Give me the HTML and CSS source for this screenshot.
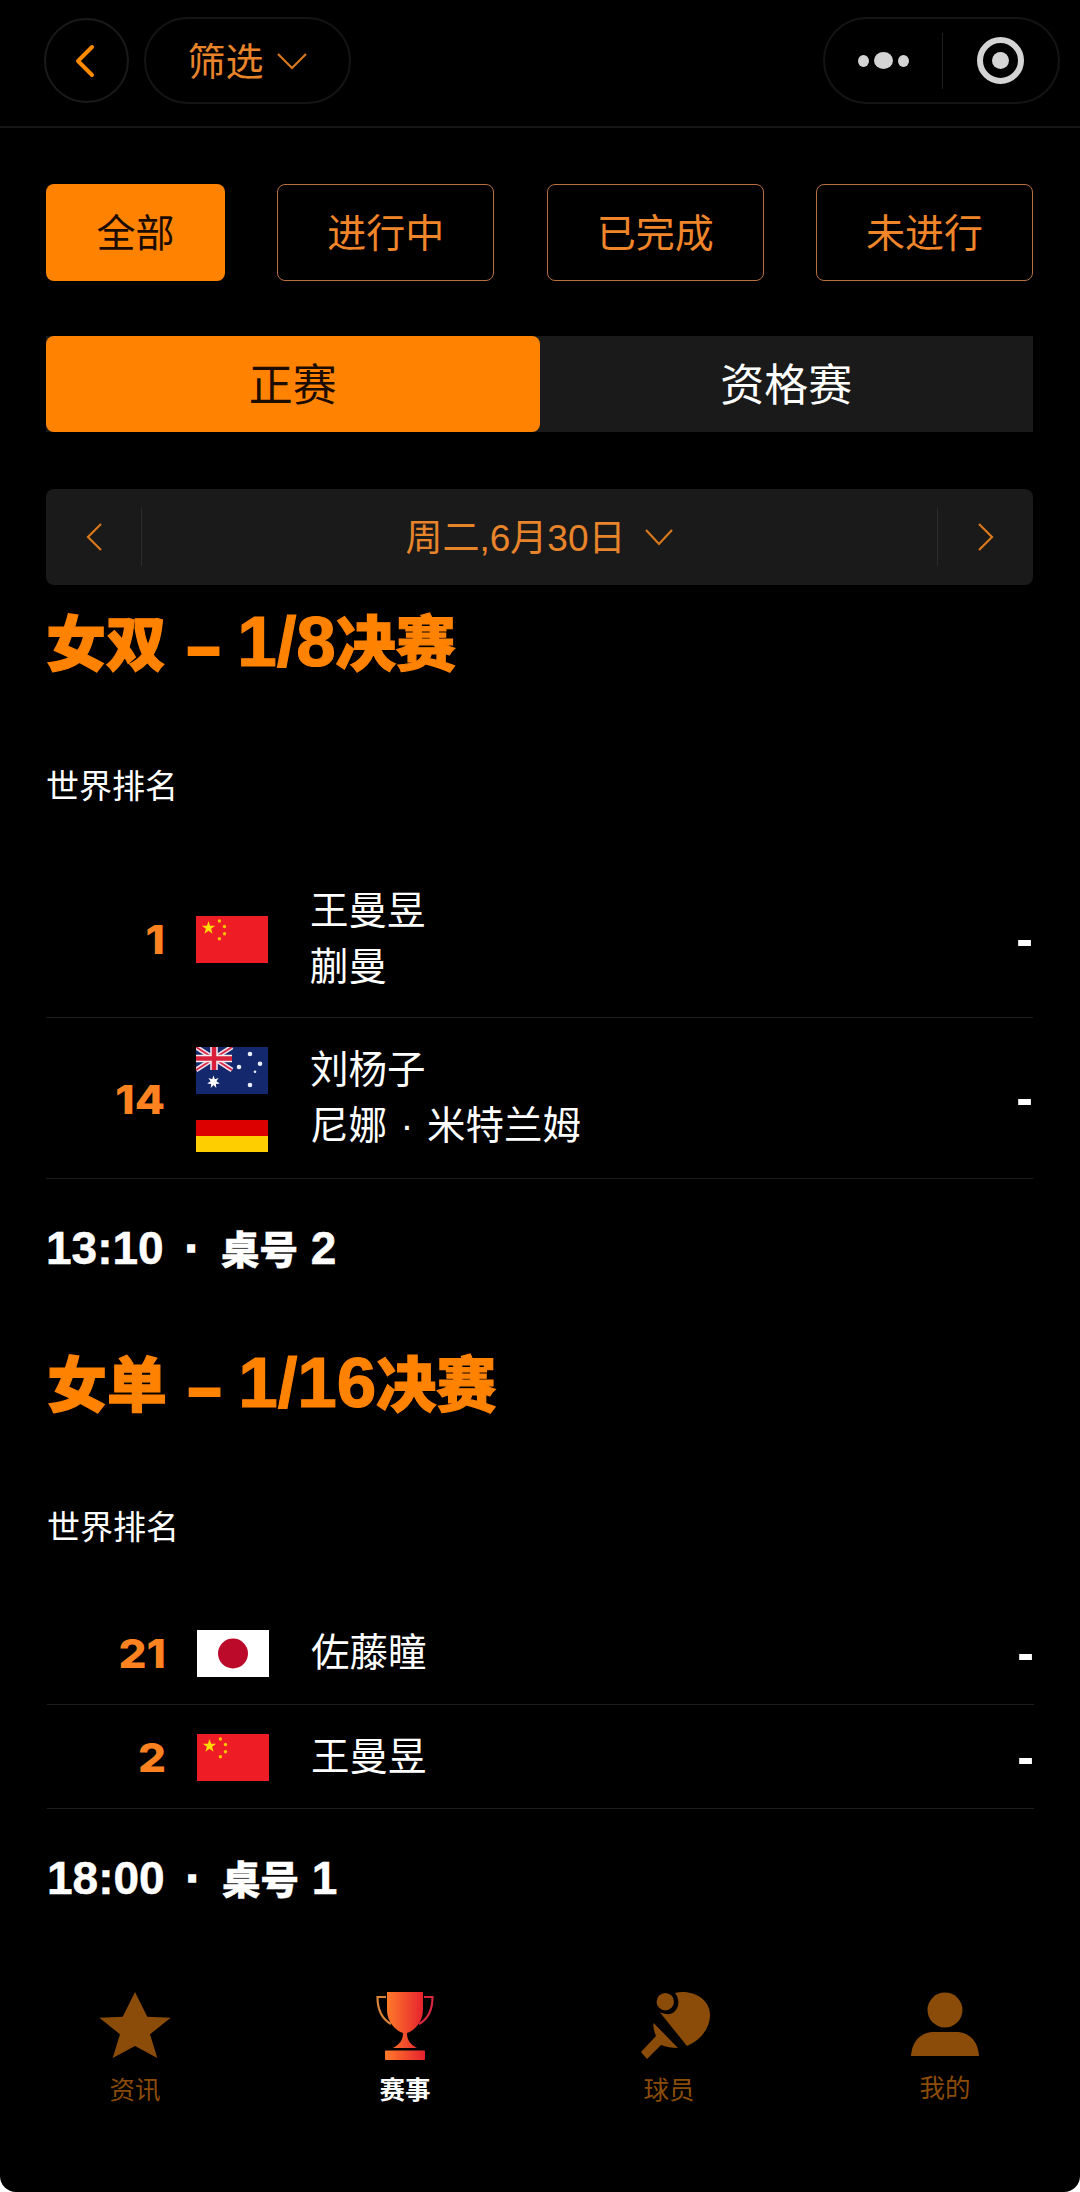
FILE: index.html
```html
<!DOCTYPE html>
<html lang="zh-CN">
<head>
    <meta charset="UTF-8">
    <meta name="viewport" content="width=device-width, initial-scale=1.0">
    <title>赛事</title>
    <link rel="stylesheet" href="styles.css">
</head>
<body>
    <svg class="defs" width="0" height="0">
        <defs>
            <symbol id="flag-cn" viewBox="0 0 72 47">
                <rect width="72" height="47" fill="#ee1c25"/>
                <polygon points="12.5,5 14.1,9.8 19.2,9.8 15.1,12.8 16.6,17.7 12.5,14.7 8.4,17.7 9.9,12.8 5.8,9.8 10.9,9.8" fill="#ffdd00"/>
                <circle cx="23.4" cy="5" r="1.7" fill="#ffc400"/>
                <circle cx="28.5" cy="10.5" r="1.7" fill="#ffc400"/>
                <circle cx="28.5" cy="17.7" r="1.7" fill="#ffc400"/>
                <circle cx="23.4" cy="22.7" r="1.7" fill="#ffc400"/>
            </symbol>
            <linearGradient id="cup" x1="0" y1="0" x2="1" y2="0">
                <stop offset="0" stop-color="#ff7a2a"/>
                <stop offset="1" stop-color="#e6222e"/>
            </linearGradient>
        </defs>
    </svg>

    <div class="page">
        <div class="topbar">
            <div class="back">
                <svg width="24" height="36" viewBox="0 0 24 36"><path d="M20 4 L6 18 L20 32" fill="none" stroke="#ff8a00" stroke-width="4" stroke-linecap="round" stroke-linejoin="round"/></svg>
            </div>
            <div class="filter-pill">
                <span class="cjk-up">筛选</span>
                <svg width="32" height="20" viewBox="0 0 32 20"><path d="M2 3 L16 17 L30 3" fill="none" stroke="#d8781c" stroke-width="2.2"/></svg>
            </div>
            <div class="capsule">
                <div class="capsule-dots"><i class="dot"></i><i class="dot big"></i><i class="dot"></i></div>
                <div class="capsule-line"></div>
                <div class="capsule-target"><i></i></div>
            </div>
        </div>

        <div class="filters">
            <div class="filter-btn first active"><span class="cjk-up">全部</span></div>
            <div class="filter-btn"><span class="cjk-up">进行中</span></div>
            <div class="filter-btn"><span class="cjk-up">已完成</span></div>
            <div class="filter-btn"><span class="cjk-up">未进行</span></div>
        </div>

        <div class="tabs">
            <div class="tab active"><span class="cjk-up">正赛</span></div>
            <div class="tab"><span class="cjk-up">资格赛</span></div>
        </div>

        <div class="datebar">
            <div class="date-arrow left">
                <svg width="20" height="30" viewBox="0 0 20 30"><path d="M17 2 L4 15 L17 28" fill="none" stroke="#d8781c" stroke-width="2.2"/></svg>
            </div>
            <div class="date-text">
                <span class="cjk-up">周二,6月30日</span>
                <svg width="30" height="20" viewBox="0 0 30 20"><path d="M2 3 L15 17 L28 3" fill="none" stroke="#d8781c" stroke-width="2.2"/></svg>
            </div>
            <div class="date-arrow right">
                <svg width="20" height="30" viewBox="0 0 20 30"><path d="M3 2 L16 15 L3 28" fill="none" stroke="#d8781c" stroke-width="2.2"/></svg>
            </div>
        </div>

        <div class="event">
            <div class="event-title">女双<span class="dash">–</span><span class="round-no">1/8</span>决赛</div>
            <div class="event-label">世界排名</div>
            <div class="row">
                <div class="rank">1</div>
                <div class="flags">
                    <svg class="flag"><use href="#flag-cn"/></svg>
                </div>
                <div class="names">
                    <div>王曼昱</div>
                    <div>蒯曼</div>
                </div>
                <div class="score">-</div>
            </div>
            <div class="row">
                <div class="rank">14</div>
                <div class="flags">
                    <svg class="flag" viewBox="0 0 72 47">
                        <rect width="72" height="47" fill="#14286e"/>
                        <path d="M0 0 L36 23 M36 0 L0 23" stroke="#f0dfe4" stroke-width="5"/>
                        <path d="M0 0 L36 23 M36 0 L0 23" stroke="#d8284a" stroke-width="1.8"/>
                        <path d="M18 0 V23 M0 11.5 H36" stroke="#f4eef0" stroke-width="7.5"/>
                        <path d="M18 0 V23 M0 11.5 H36" stroke="#d8203c" stroke-width="4.5"/>
                        <polygon points="17.5,28.5 18.8,32.3 22.6,31 20.4,34.3 23.8,36.4 19.8,36.9 20.3,40.9 17.5,38 14.7,40.9 15.2,36.9 11.2,36.4 14.6,34.3 12.4,31 16.2,32.3" fill="#fff"/>
                        <circle cx="54" cy="7" r="2.3" fill="#e8eefa"/>
                        <circle cx="64" cy="16.7" r="2.3" fill="#e8eefa"/>
                        <circle cx="43" cy="20" r="2.3" fill="#e8eefa"/>
                        <circle cx="59" cy="24.7" r="1.3" fill="#e8eefa"/>
                        <circle cx="54" cy="38" r="2.3" fill="#e8eefa"/>
                    </svg>
                    <svg class="flag" viewBox="0 0 72 47">
                        <rect width="72" height="16" fill="#000"/>
                        <rect y="15" width="72" height="16" fill="#dd0000"/>
                        <rect y="31" width="72" height="16" fill="#ffce00"/>
                    </svg>
                </div>
                <div class="names">
                    <div>刘杨子</div>
                    <div>尼娜<span class="mid">·</span>米特兰姆</div>
                </div>
                <div class="score">-</div>
            </div>
            <div class="event-time">13:10<span class="sep">·</span><span class="table-no">桌号</span> 2</div>
        </div>

        <div class="event second">
            <div class="event-title">女单<span class="dash">–</span><span class="round-no">1/16</span>决赛</div>
            <div class="event-label">世界排名</div>
            <div class="row single">
                <div class="rank">21</div>
                <div class="flags">
                    <svg class="flag" viewBox="0 0 72 47">
                        <rect width="72" height="47" fill="#fff"/>
                        <circle cx="36" cy="23.5" r="15" fill="#bc0a2a"/>
                    </svg>
                </div>
                <div class="names">
                    <div>佐藤瞳</div>
                </div>
                <div class="score">-</div>
            </div>
            <div class="row single">
                <div class="rank">2</div>
                <div class="flags">
                    <svg class="flag"><use href="#flag-cn"/></svg>
                </div>
                <div class="names">
                    <div>王曼昱</div>
                </div>
                <div class="score">-</div>
            </div>
            <div class="event-time">18:00<span class="sep">·</span><span class="table-no">桌号</span> 1</div>
        </div>

        <div class="tabbar">
            <div class="tabbar-item">
                <svg width="76" height="72" viewBox="0 0 76 72"><polygon points="38,4 50.3,28.7 73.7,29.7 53,46.3 60.3,70 38,58 15.7,70 23,46.3 2.3,29.7 25.7,28.7" fill="#8a4c08"/></svg>
                <span>资讯</span>
            </div>
            <div class="tabbar-item current">
                <svg width="60" height="72" viewBox="0 0 60 72">
                    <path d="M12 4 H48 V22 C48 34 39 43 32 45 C32 52 35 56 42 60 H18 C25 56 28 52 28 45 C21 43 12 34 12 22 Z" fill="url(#cup)"/>
                    <rect x="10" y="62.5" width="40" height="9.5" rx="1" fill="url(#cup)"/>
                    <path d="M11 9 H2.5 C2.5 22 7 31 16 36" fill="none" stroke="#d8823a" stroke-width="2.2"/>
                    <path d="M49 9 H57.5 C57.5 22 53 31 44 36" fill="none" stroke="#d82840" stroke-width="2.2"/>
                </svg>
                <span>赛事</span>
            </div>
            <div class="tabbar-item player">
                <svg width="72" height="72" viewBox="0 0 72 72">
                    <circle cx="26.3" cy="13.7" r="8.7" fill="#8a4c08"/>
                    <path d="M36 5 C52 1 71 10 71 27 C71 40 62 52 48 58 L20.6 24 C27 27 33 27 36 23 C40 19 41 11 36 5 Z" fill="#8a4c08"/>
                    <path d="M14.6 35 L39 60 C33 60 27 59 22 57 L8 71 L2 64 L17 48 C15 43 14 39 14.6 35 Z" fill="#8a4c08"/>
                </svg>
                <span>球员</span>
            </div>
            <div class="tabbar-item mine">
                <svg width="70" height="66" viewBox="0 0 70 66">
                    <circle cx="35" cy="18" r="17.5" fill="#8a4c08"/>
                    <path d="M1 64 C2 48 12 40 24 40 H46 C58 40 68 48 69 64 Z" fill="#8a4c08"/>
                </svg>
                <span>我的</span>
            </div>
        </div>
    </div>
</body>
</html>
```

FILE: styles.css
```css
* {
    box-sizing: border-box;
}

html,
body {
    background: #fff;
}

body {
    margin: 0;
    color: #fff;
    font-family: "Liberation Sans", "Noto Sans CJK SC", sans-serif;
}

.defs {
    position: absolute;
}

.page {
    width: 1080px;
    height: 2192px;
    overflow: hidden;
    background: #000;
    border-radius: 0 0 16px 16px;
    display: flex;
    flex-direction: column;
}

/* the CJK font sits a little low in its line box */
.cjk-up {
    margin-bottom: 5px;
}

/* top bar */
.topbar {
    height: 128px;
    padding: 17px 20px 0 44px;
    display: flex;
    align-items: flex-start;
    border-bottom: 2px solid #161616;
}

.back {
    width: 85px;
    height: 85px;
    margin-top: 1px;
    border: 2px solid #1a1a1a;
    border-radius: 50%;
    padding-right: 5px;
    display: flex;
    align-items: center;
    justify-content: center;
}

.filter-pill {
    width: 207px;
    height: 87px;
    margin-left: 15px;
    border: 2px solid #141414;
    border-radius: 44px;
    display: flex;
    align-items: center;
    justify-content: center;
    gap: 12px;
    color: #e8842a;
    font-size: 38px;
}

.capsule {
    width: 237px;
    height: 87px;
    margin-left: auto;
    border: 2px solid #141414;
    border-radius: 44px;
    display: flex;
    align-items: center;
}

.capsule-dots {
    width: 118px;
    display: flex;
    align-items: center;
    justify-content: center;
    gap: 5px;
}

.dot {
    width: 11px;
    height: 12px;
    border-radius: 50%;
    background: #d4d4d4;
}

.dot.big {
    width: 19px;
    height: 17px;
}

.capsule-line {
    width: 1px;
    height: 56px;
    background: #1e1e1e;
}

.capsule-target {
    width: 116px;
    display: flex;
    justify-content: center;
}

.capsule-target i {
    width: 47px;
    height: 47px;
    border: 6px solid #d4d4d4;
    border-radius: 50%;
    display: flex;
    align-items: center;
    justify-content: center;
}

.capsule-target i::after {
    content: "";
    width: 17px;
    height: 17px;
    border-radius: 50%;
    background: #d4d4d4;
}

/* filter buttons */
.filters {
    margin: 56px 47px 0 46px;
    display: flex;
    justify-content: space-between;
}

.filter-btn {
    width: 217px;
    height: 97px;
    border: 1px solid #b87040;
    border-radius: 8px;
    color: #f0852a;
    font-size: 39px;
    display: flex;
    align-items: center;
    justify-content: center;
}

.filter-btn.first {
    width: 179px;
}

.filter-btn.active {
    background: #ff8200;
    border: 0;
    color: #1c0c00;
}

/* main / qualifying tabs */
.tabs {
    margin: 55px 47px 0 46px;
    height: 96px;
    background: #1a1a1a;
    display: flex;
}

.tab {
    flex: 1;
    font-size: 44px;
    display: flex;
    align-items: center;
    justify-content: center;
}

.tab.active {
    background: #ff8200;
    border-radius: 8px;
    color: #1c0c00;
}

/* date bar */
.datebar {
    margin: 57px 47px 0 46px;
    height: 96px;
    background: #1a1a1a;
    border-radius: 8px;
    display: flex;
    align-items: center;
}

.date-arrow {
    width: 96px;
    height: 58px;
    display: flex;
    align-items: center;
    justify-content: center;
}

.date-arrow.left {
    border-right: 1px solid #2c2c2c;
}

.date-arrow.right {
    border-left: 1px solid #2c2c2c;
}

.date-text {
    flex: 1;
    display: flex;
    align-items: center;
    justify-content: center;
    gap: 18px;
    color: #e8842a;
    font-size: 37px;
}

/* events */
.event {
    margin: 0 47px 49px 46px;
}

.event.second {
    margin-left: 47px;
    margin-right: 46px;
}

.event-title {
    height: 114px;
    line-height: 113px;
    color: #ff8200;
    font-size: 60px;
    font-weight: 900;
    -webkit-text-stroke: 1.2px #ff8200;
    white-space: nowrap;
}

.round-no {
    font-size: 71px;
}

.dash {
    margin: 0 18px 0 22px;
    font-size: 56px;
    -webkit-text-stroke: 4px #ff8200;
}

.event-label {
    margin-top: 64px;
    margin-bottom: 51px;
    height: 46px;
    line-height: 48px;
    font-size: 33px;
}

.row {
    height: 158px;
    border-bottom: 1px solid #1c1c1c;
    display: flex;
    align-items: center;
}

.row + .row {
    height: 161px;
}

.row.single {
    height: 104px;
}

.rank {
    width: 119px;
    margin-top: 2px;
    text-align: right;
    color: #ff8220;
    font-family: Inter, "Liberation Sans", sans-serif;
    font-size: 40px;
    font-weight: 800;
    transform: scaleX(1.1);
    transform-origin: right center;
}

.flags {
    width: 72px;
    margin-left: 31px;
    margin-top: 2px;
    display: flex;
    flex-direction: column;
    gap: 11px;
}

.flag {
    display: block;
    width: 72px;
    height: 47px;
}

.names {
    margin-left: 42px;
    flex: 1;
    font-size: 38.5px;
    line-height: 56px;
}

.mid {
    display: inline-block;
    width: 40px;
    text-align: center;
}

.score {
    font-size: 50px;
    line-height: 58px;
    font-weight: 700;
}

.event-time {
    margin-top: 38px;
    height: 60px;
    line-height: 62px;
    font-size: 46px;
    font-weight: 700;
    -webkit-text-stroke: 0.5px #fff;
    white-space: nowrap;
}

.event-time .sep {
    margin: 0 21px;
    -webkit-text-stroke: 1.5px #fff;
}

.table-no {
    font-size: 38.5px;
    font-weight: 900;
}

/* bottom tabbar */
.tabbar {
    margin-top: auto;
    height: 204px;
    display: grid;
    grid-template-columns: repeat(4, 270px);
    color: #8a4c08;
    font-size: 25.5px;
}

.tabbar-item {
    display: flex;
    flex-direction: column;
    align-items: center;
}

.tabbar-item svg {
    display: block;
    margin-bottom: 9px;
}

.tabbar-item.current {
    color: #fff;
    font-weight: 700;
}

.tabbar-item.player {
    padding-right: 12px;
}

.tabbar-item.player svg {
    margin-left: 12px;
}

.tabbar-item.mine svg {
    margin-top: 4px;
    margin-bottom: 9px;
}
```
